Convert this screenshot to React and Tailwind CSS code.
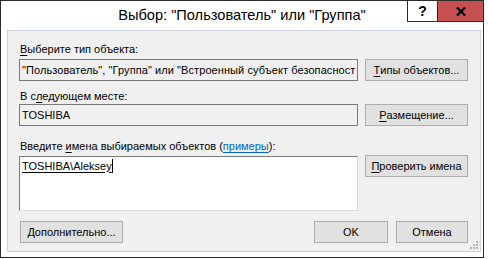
import React from 'react'

const ui = "font-['Liberation_Sans',Arial,sans-serif]"

function Btn({ children, className = '' }) {
    return (
        <div
            className={`h-[22px] flex items-center justify-center border border-[#adadad] bg-[#e1e1e1] text-[11px] text-black ${className}`}
        >
            {children}
        </div>
    )
}

function U({ children }) {
    return <span className="underline underline-offset-[2px]">{children}</span>
}

function SizeGrip() {
    const dots = [
        [6, 0],
        [3, 3],
        [6, 3],
        [0, 6],
        [3, 6],
        [6, 6],
    ]
    return (
        <svg width="8" height="8" className="absolute right-[2px] bottom-[2px]">
            {dots.map(([x, y], i) => (
                <rect key={i} x={x} y={y} width="2" height="2" fill="#b8b8b8" />
            ))}
        </svg>
    )
}

export default function App() {
    return (
        <div className={`w-[488px] h-[259px] bg-white ${ui}`}>
            <div className="w-[484px] h-[258px] border border-[#2b2b2b] bg-white flex flex-col">
                {/* title bar */}
                <div className="relative h-[29px] shrink-0">
                    <div className="absolute inset-x-0 top-[4px] text-center text-[14.6px] text-black leading-[20px]">
                        Выбор: "Пользователь" или "Группа"
                    </div>
                    <div className="absolute right-0 top-0 flex">
                        <div className="w-[30px] h-[21px] border-l border-b border-[#2b2b2b] bg-white flex items-center justify-center text-[14px] font-bold text-black">
                            ?
                        </div>
                        <div className="w-[46px] h-[21px] border-l border-b border-[#2b2b2b] bg-[#c75050] flex items-center justify-center">
                            <svg width="10" height="9" viewBox="0 0 10 9">
                                <path d="M1 0.5 L9 8.5 M9 0.5 L1 8.5" stroke="#000" strokeWidth="2.2" />
                            </svg>
                        </div>
                    </div>
                </div>

                {/* client area */}
                <div className="relative ml-[6px] mr-[2px] h-[222px] border border-[#c9d2de] bg-[#f0f0f0] pl-[11px] pr-[12px] pt-[12px] text-[11px] leading-[13px] text-black">
                    <div className="pl-px">
                        <U>В</U>ыберите тип объекта:
                    </div>
                    <div className="mt-[3px] flex gap-[7px]">
                        <div className="w-[339px] h-[22px] border border-[#7a7a7a] bg-[#f0f0f0] flex items-center pl-[2px] overflow-hidden whitespace-nowrap tracking-[0.08px]">
                            "Пользователь", "Группа" или "Встроенный субъект безопасност
                        </div>
                        <Btn className="w-[103px]">
                            <U>Т</U>ипы объектов...
                        </Btn>
                    </div>

                    <div className="mt-[9px] pl-px">
                        В с<U>л</U>едующем месте:
                    </div>
                    <div className="mt-px flex gap-[7px]">
                        <div className="w-[339px] h-[22px] border border-[#7a7a7a] bg-[#f0f0f0] flex items-center pl-[2px]">
                            TOSHIBA
                        </div>
                        <Btn className="w-[103px]">
                            <U>Р</U>азмещение...
                        </Btn>
                    </div>

                    <div className="mt-[14px] pl-px">
                        Введите <U>и</U>мена выбираемых объектов (
                        <span className="text-[#0066cc] underline underline-offset-[2px]">примеры</span>):
                    </div>
                    <div className="mt-[3px] flex items-start gap-[7px]">
                        <div className="w-[339px] h-[55px] border border-t-[#7a7a7a] border-l-[#7a7a7a] border-r-[#dcdcdc] border-b-[#dcdcdc] bg-white pl-[2px] pt-[2px]">
                            <div className="flex items-center">
                                <span className="underline underline-offset-[2px]">TOSHIBA\Aleksey</span>
                                <span className="w-px h-[14px] bg-black" />
                            </div>
                        </div>
                        <Btn className="w-[103px] -mt-px">
                            <U>П</U>роверить имена
                        </Btn>
                    </div>

                    <div className="mt-[10px] flex items-center">
                        <Btn className="w-[103px] ml-px">
                            <U>Д</U>ополнительно...
                        </Btn>
                        <div className="flex-1" />
                        <Btn className="w-[74px]">OK</Btn>
                        <Btn className="w-[72px] ml-[8px]">Отмена</Btn>
                    </div>

                    <SizeGrip />
                </div>
            </div>
        </div>
    )
}
